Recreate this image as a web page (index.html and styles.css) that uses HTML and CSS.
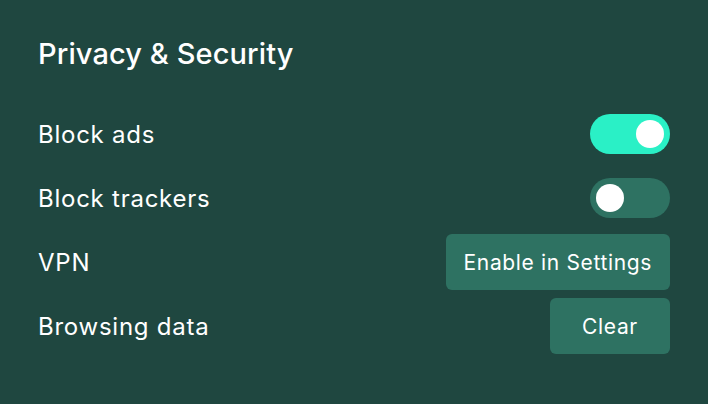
FILE: index.html
```html
<!DOCTYPE html>
<html>
<head>
<meta charset="utf-8">
<link rel="stylesheet" href="styles.css">
</head>
<body>
<div class="panel">
  <h1 class="title">Privacy &amp; Security</h1>
  <div class="rows">
    <div class="row">
      <span class="label">Block ads</span>
      <span class="toggle on"><span class="knob"></span></span>
    </div>
    <div class="row">
      <span class="label">Block trackers</span>
      <span class="toggle"><span class="knob"></span></span>
    </div>
    <div class="row">
      <span class="label">VPN</span>
      <button class="btn">Enable in Settings</button>
    </div>
    <div class="row">
      <span class="label">Browsing data</span>
      <button class="btn clear">Clear</button>
    </div>
  </div>
</div>
</body>
</html>
```
FILE: styles.css
```css
html, body {
  margin: 0;
  padding: 0;
  background: #1f4740;
  width: 708px;
  height: 404px;
  overflow: hidden;
}
.panel {
  padding: 33px 38px 0 38px;
  font-family: Inter, "Noto Sans", sans-serif;
  color: #ffffff;
}
.title {
  margin: 0;
  font-size: 29px;
  font-weight: 500;
  letter-spacing: 0.1px;
  line-height: 42px;
}
.rows {
  margin-top: 31px;
  display: flex;
  flex-direction: column;
  gap: 8px;
}
.row {
  height: 56px;
  display: flex;
  align-items: center;
  justify-content: space-between;
}
.label {
  font-size: 24px;
  letter-spacing: 0.75px;
}
.toggle {
  width: 80px;
  height: 40px;
  border-radius: 20px;
  background: #2e7262;
  display: flex;
  align-items: center;
  padding: 0 6px;
  box-sizing: border-box;
}
.toggle.on {
  background: #2af0c6;
  justify-content: flex-end;
}
.knob {
  width: 28px;
  height: 28px;
  border-radius: 50%;
  background: #ffffff;
}
.btn {
  height: 56px;
  border: none;
  border-radius: 6px;
  background: #2e7262;
  color: #ffffff;
  font-family: Inter, "Noto Sans", sans-serif;
  font-size: 21px;
  letter-spacing: 0.65px;
  padding: 0 18px;
}
.btn.clear {
  width: 120px;
}
```
